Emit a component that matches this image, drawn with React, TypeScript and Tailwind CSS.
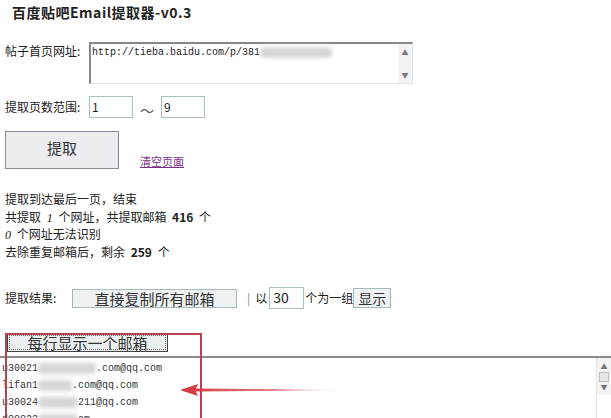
import React from "react";

const cjk = "font-['Noto_Sans_CJK_SC','Noto_Sans',sans-serif]";
const mono = "font-['Liberation_Mono','DejaVu_Sans_Mono',monospace]";

function Smudge({ w }: { w: number }) {
  return (
    <span
      className="inline-block h-[11px] align-middle bg-[#d6d6d6] blur-[2px] rounded-sm"
      style={{ width: w }}
    />
  );
}

function Scrollbar({ thumb }: { thumb?: boolean }) {
  return (
    <div className="flex w-[14px] flex-col items-center bg-[#f3f3f3] text-[7px] leading-[10px] text-[#777]">
      <span className="mt-[3px]">▲</span>
      {thumb && <div className="mt-[1px] h-[10px] w-[10px] border border-[#bbb] bg-[#e6e6e6]" />}
      <span className="mt-auto mb-[3px]">▼</span>
    </div>
  );
}

export default function App() {
  return (
    <div className={`relative h-[418px] w-[611px] overflow-hidden bg-white text-[#222] ${cjk}`}>
      <h1 className="pl-[12px] pt-[3px] text-[14px] font-bold leading-[18px] tracking-[0.5px]">
        百度贴吧Email提取器-v0.3
      </h1>

      <div className="mt-[21px] flex items-start pl-[5px]">
        <span className="w-[84px] pt-[1px] text-[12px] leading-[16px]">帖子首页网址:</span>
        <div className="flex h-[42px] w-[324px] border-t-2 border-l-2 border-r border-b border-t-[#888] border-l-[#888] border-r-[#e2e2e2] border-b-[#e2e2e2] bg-white">
          <div className={`flex-1 pl-[1px] pt-[2px] text-[10px] leading-[13px] ${mono}`}>
            http://tieba.baidu.com/p/381<Smudge w={72} />
          </div>
          <Scrollbar />
        </div>
      </div>

      <div className="mt-[12px] flex h-[22px] items-center pl-[5px]">
        <span className="w-[84px] text-[12px] leading-[16px]">提取页数范围:</span>
        <div className="h-[22px] w-[44px] border border-[#a9c2ba] pl-[2px] text-[12px] leading-[20px]">1</div>
        <span className="mx-[7px] translate-y-[3px] text-[14px] leading-[16px] text-[#555]">～</span>
        <div className="h-[22px] w-[44px] border border-[#a9c2ba] pl-[2px] text-[12px] leading-[20px]">9</div>
      </div>

      <div className="mt-[13px] flex items-end pl-[5px]">
        <button className="h-[38px] w-[114px] border border-[#8c8c98] bg-[#ececf1] pb-[4px] text-[15px] text-[#333]">
          提取
        </button>
        <a className="mb-[1px] ml-[21px] text-[11px] leading-[14px] text-[#7a2f8a] underline">清空页面</a>
      </div>

      <div className="mt-[21px] flex flex-col pl-[5px] text-[12px]">
        <p className="h-[17.5px] leading-[17.5px]">提取到达最后一页，结束</p>
        <p className="h-[17.5px] leading-[17.5px]">
          共提取 <i className="px-[3px] font-['Liberation_Serif',serif] leading-none">1</i> 个网址，共提取邮箱{" "}
          <b className="px-[3px] leading-none">416</b> 个
        </p>
        <p className="h-[17.5px] leading-[17.5px]">
          <i className="pr-[3px] font-['Liberation_Serif',serif] leading-none">0</i> 个网址无法识别
        </p>
        <p className="h-[17.5px] leading-[17.5px]">
          去除重复邮箱后，剩余 <b className="px-[3px] leading-none">259</b> 个
        </p>
      </div>

      <div className="mt-[27px] flex h-[22px] items-center pl-[5px] text-[12px]">
        <span className="w-[67px]">提取结果:</span>
        <button className="h-[19px] w-[165px] border border-[#a8b8b8] bg-[#eef2f2] text-[15px] leading-[17px] text-[#333]">
          直接复制所有邮箱
        </button>
        <span className="ml-[10px] text-[#888]">|</span>
        <span className="ml-[5px]">以</span>
        <div className="ml-[2px] h-[22px] w-[35px] border border-[#a9c2ba] pl-[3px] text-[14px] leading-[18px]">30</div>
        <span className="ml-[1px]">个为一组</span>
        <button className="h-[20px] w-[38px] border border-[#a8b8b8] bg-[#eef2f2] text-[14px] leading-[18px] text-[#333]">
          显示
        </button>
      </div>

      <div className="mt-[21px] pl-[7px]">
        <button className="h-[19px] w-[161px] border border-[#444] bg-[#eceff0] text-[15px] leading-[15px] text-[#333] outline-1 outline-dotted outline-[#666] -outline-offset-[3px]">
          每行显示一个邮箱
        </button>
      </div>

      <div className="mt-[2px] flex h-[80px] border-t-2 border-t-[#8a8a8a]">
        <div className={`flex-1 pl-[2px] pt-[2px] text-[10px] leading-[17px] text-[#333] ${mono}`}>
          <p>u30021<Smudge w={58} />.com@qq.com</p>
          <p>lifan1<Smudge w={34} />.com@qq.com</p>
          <p>u30024<Smudge w={40} />211@qq.com</p>
          <p>d99022<Smudge w={40} />om</p>
        </div>
        <div className="w-[15px] border-l border-[#e5e5e5]">
          <Scrollbar thumb />
        </div>
      </div>

      <div className="absolute left-[5px] top-[333px] h-[100px] w-[197px] border-2 border-[#b5434f]" />

      <svg className="absolute left-[178px] top-[382px]" width="160" height="16" viewBox="0 0 160 16">
        <defs>
          <linearGradient id="arr" x1="0" y1="0" x2="1" y2="0">
            <stop offset="0" stopColor="#d2343c" />
            <stop offset="0.6" stopColor="#d85a60" stopOpacity="0.8" />
            <stop offset="1" stopColor="#e6a0a0" stopOpacity="0" />
          </linearGradient>
        </defs>
        <path d="M2 8 L20 2 L18 6.5 L158 7.5 L158 8.5 L18 9.5 L20 14 Z" fill="url(#arr)" />
      </svg>
    </div>
  );
}
